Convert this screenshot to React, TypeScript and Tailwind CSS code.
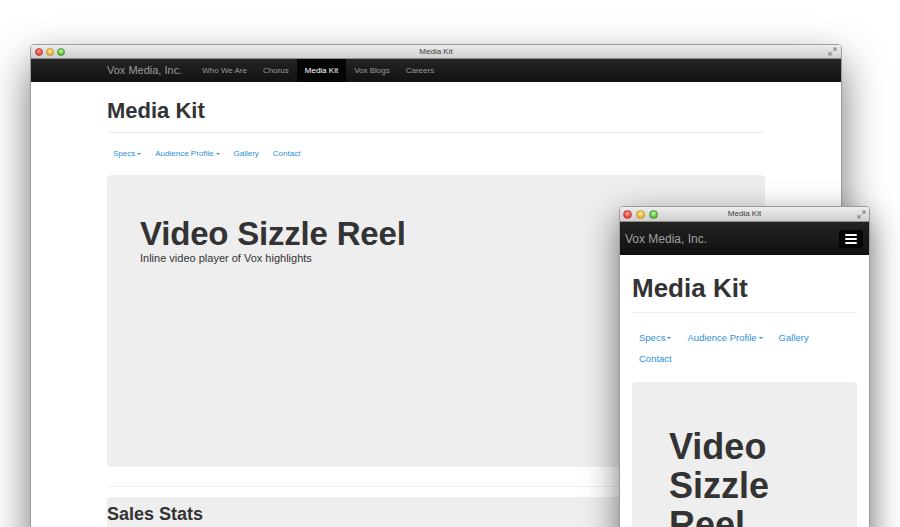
import type { ReactNode } from 'react'

const font = "font-['Liberation_Sans',Arial,sans-serif]"

function TrafficLights({ size }: { size: 'lg' | 'sm' }) {
  const dot = size === 'lg' ? 'w-[8px] h-[8px]' : 'w-[9px] h-[9px]'
  const gap = size === 'lg' ? 'gap-[3px]' : 'gap-[4px]'
  return (
    <div className={`flex items-center ${gap}`}>
      <span className={`${dot} rounded-full border border-[#c2403b] bg-[radial-gradient(circle_at_50%_35%,#ffb3ab,#f0453c_60%,#c8302a)]`} />
      <span className={`${dot} rounded-full border border-[#c49630] bg-[radial-gradient(circle_at_50%_35%,#fff0b0,#f2b731_60%,#d0942a)]`} />
      <span className={`${dot} rounded-full border border-[#4b9a35] bg-[radial-gradient(circle_at_50%_35%,#d6f7b8,#5ec23f_60%,#3e9a2c)]`} />
    </div>
  )
}

function ResizeIcon() {
  return (
    <svg width="9" height="9" viewBox="0 0 9 9" className="text-[#8e8e8e]">
      <path d="M5 1h3v3M8 1L5.2 3.8" stroke="currentColor" strokeWidth="1.1" fill="none" />
      <path d="M4 8H1V5M1 8l2.8-2.8" stroke="currentColor" strokeWidth="1.1" fill="none" />
    </svg>
  )
}

function MacWindow({
  title,
  size,
  className,
  children,
}: {
  title: string
  size: 'lg' | 'sm'
  className: string
  children: ReactNode
}) {
  return (
    <div className={`absolute border border-[#9c9c9c] rounded-t-[4px] bg-white overflow-hidden ${className}`}>
      {/* title bar */}
      <div
        className={`relative flex items-center bg-gradient-to-b from-[#ededed] to-[#cfcfcf] border-b border-[#8f8f8f] ${
          size === 'lg' ? 'h-[14px] px-[4px]' : 'h-[15px] px-[3px]'
        }`}
      >
        <TrafficLights size={size} />
        <span className="absolute inset-x-0 text-center text-[8px] leading-none text-[#3c3c3c]">{title}</span>
        <span className="ml-auto flex">
          <ResizeIcon />
        </span>
      </div>
      {children}
    </div>
  )
}

function Caret() {
  return (
    <span className="inline-block ml-[2px] align-middle w-0 h-0 border-t-[2.5px] border-t-current border-x-[2.5px] border-x-transparent" />
  )
}

function Pills({ size }: { size: 'lg' | 'sm' }) {
  const link =
    size === 'lg'
      ? 'px-[6px] text-[8px] leading-[12px] mr-[2px]'
      : 'px-[7px] text-[9.5px] leading-[21px] mr-[2px]'
  const items = [
    { label: 'Specs', caret: true },
    { label: 'Audience Profile', caret: true },
    { label: 'Gallery', caret: false },
    { label: 'Contact', caret: false },
  ]
  return (
    <div className="flex flex-wrap text-[#2e8fd5]">
      {items.map((item) => (
        <span key={item.label} className={link}>
          {item.label}
          {item.caret && <Caret />}
        </span>
      ))}
    </div>
  )
}

export default function App() {
  const navLinks = ['Who We Are', 'Chorus', 'Media Kit', 'Vox Blogs', 'Careers']

  return (
    <div className={`relative w-[900px] h-[527px] overflow-hidden bg-white ${font}`}>
      {/* Desktop window */}
      <MacWindow
        title="Media Kit"
        size="lg"
        className="left-[30px] top-[44px] w-[812px] h-[520px] shadow-[0_18px_40px_rgba(0,0,0,0.55)]"
      >
        <div className="h-[23px] bg-gradient-to-b from-[#242424] to-[#121212]">
          <div className="mx-auto w-[658px] h-full flex items-center">
            <span className="text-[11px] text-[#9a9a9a] mr-[12px]">Vox Media, Inc.</span>
            {navLinks.map((l) => (
              <span
                key={l}
                className={`h-full flex items-center px-[8px] text-[8px] ${
                  l === 'Media Kit' ? 'bg-[#050505] text-white' : 'text-[#9a9a9a]'
                }`}
              >
                {l}
              </span>
            ))}
          </div>
        </div>

        <div className="mx-auto w-[658px]">
          <div className="pt-[16px] pb-[8px] border-b border-[#eeeeee]">
            <h1 className="text-[22px] leading-[26px] font-bold text-[#333]">Media Kit</h1>
          </div>

          <div className="mt-[15px]">
            <Pills size="lg" />
          </div>

          <div className="mt-[15px] h-[292px] rounded-[4px] bg-[#eeeeee] pt-[41px] pl-[33px]">
            <h2 className="text-[33px] leading-[35px] font-bold text-[#333] tracking-[-0.2px]">Video Sizzle Reel</h2>
            <p className="text-[11px] leading-[14px] text-[#333]">Inline video player of Vox highlights</p>
          </div>

          <div className="mt-[19px] border-t border-[#eeeeee]" />

          <div className="mt-[10px] h-[60px] rounded-tl-[4px] bg-[#eeeeee] pt-[6px]">
            <h3 className="text-[18px] leading-[22px] font-bold text-[#333]">Sales Stats</h3>
          </div>
        </div>
      </MacWindow>

      {/* Mobile window */}
      <MacWindow
        title="Media Kit"
        size="sm"
        className="left-[619px] top-[206px] w-[251px] h-[340px] shadow-[0_12px_34px_rgba(0,0,0,0.55)]"
      >
        <div className="h-[33px] flex items-center justify-between pl-[5px] pr-[6px] bg-gradient-to-b from-[#222] to-[#111]">
          <span className="text-[12px] text-[#a0a0a0]">Vox Media, Inc.</span>
          <span className="w-[24px] h-[18px] rounded-[3px] bg-[#050505] flex flex-col items-center justify-center gap-[2px]">
            <span className="w-[12px] h-[2px] bg-white rounded-[1px]" />
            <span className="w-[12px] h-[2px] bg-white rounded-[1px]" />
            <span className="w-[12px] h-[2px] bg-white rounded-[1px]" />
          </span>
        </div>

        <div className="px-[12px]">
          <div className="pt-[18px] pb-[9px] border-b border-[#eeeeee]">
            <h1 className="text-[26px] leading-[30px] font-bold text-[#333]">Media Kit</h1>
          </div>

          <div className="mt-[14px]">
            <Pills size="sm" />
          </div>

          <div className="mt-[13px] h-[200px] rounded-[4px] bg-[#eeeeee] pt-[45px] pl-[37px]">
            <h2 className="text-[36px] leading-[39px] font-bold text-[#333]">
              Video
              <br />
              Sizzle
              <br />
              Reel
            </h2>
          </div>
        </div>
      </MacWindow>
    </div>
  )
}
